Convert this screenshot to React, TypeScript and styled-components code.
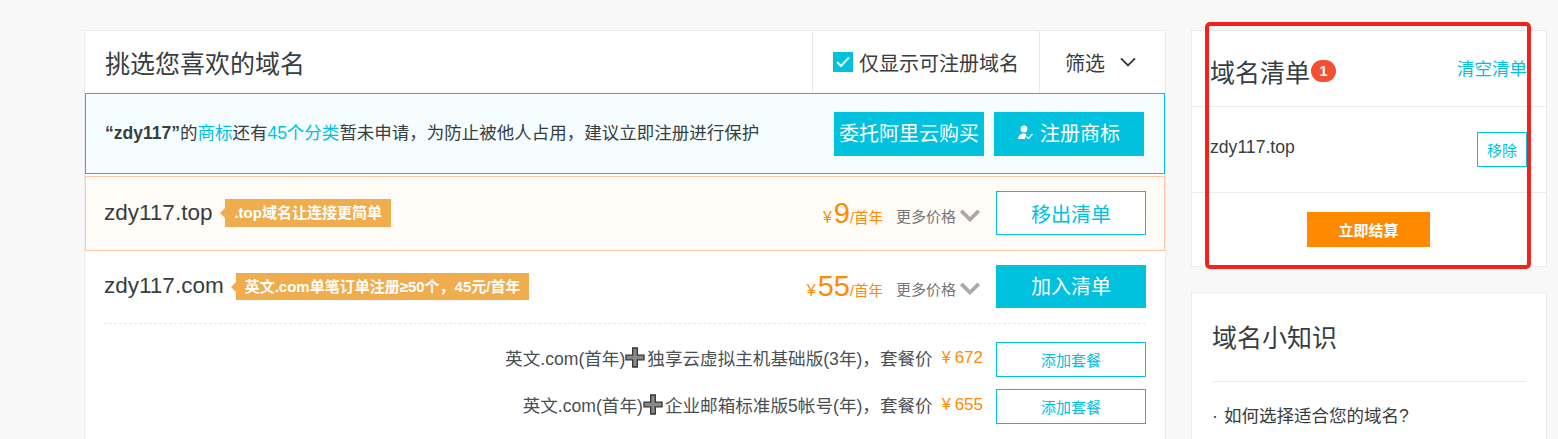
import React from "react";
import styled, { createGlobalStyle } from "styled-components";

const FONT = `"Liberation Sans", "Noto Sans CJK SC", sans-serif`;
const CYAN = "#00c1de";
const ORANGE = "#ff8a00";

const Global = createGlobalStyle`
  html, body { margin: 0; padding: 0; height: 439px; overflow: hidden; background: #f8f8f8; }
  body { font-family: ${FONT}; color: #373d41; }
  * { box-sizing: border-box; }
`;

const Page = styled.div`
  position: relative;
  display: flex;
  align-items: flex-start;
  gap: 25px;
  padding: 30px 11px 0 84px;
  width: 1558px;
`;
const Main = styled.main`
  width: 1082px;
  flex: none;
  background: #fff;
  border: 1px solid #ebebeb;
  padding-bottom: 40px;
`;
const Head = styled.div`
  display: flex;
  height: 62px;
  align-items: stretch;
`;
const Title = styled.h1`
  flex: 1;
  margin: 0;
  padding: 2px 0 0 20px;
  font-size: 25px;
  line-height: 62px;
  font-weight: 400;
`;
const HeadCell = styled.div<{ $w: number }>`
  width: ${(p) => p.$w}px;
  flex: none;
  display: flex;
  align-items: center;
  border-left: 1px solid #e8e8e8;
  padding-left: 20px;
  font-size: 20px;
`;
const Check = styled.span`
  width: 20px;
  height: 20px;
  background: ${CYAN};
  margin-right: 6px;
  display: flex;
  align-items: center;
  justify-content: center;
`;
const FilterCell = styled(HeadCell)`
  padding-left: 25px;
  gap: 15px;
`;
const Banner = styled.div`
  height: 81px;
  border: 1px solid ${CYAN};
  background: #f5fdff;
  display: flex;
  align-items: center;
  padding: 0 20px 0 19px;
  font-size: 17.5px;
`;
const BannerText = styled.p`
  flex: 1;
  margin: 0 0 4px;
  b { font-weight: 700; }
`;
const Link = styled.span`
  color: ${CYAN};
`;
const SolidButton = styled.button<{ $h: number; $gapLeft?: number }>`
  width: 150px;
  height: ${(p) => p.$h}px;
  flex: none;
  border: 0;
  padding: 0 0 2px;
  margin-left: ${(p) => p.$gapLeft ?? 0}px;
  background: ${CYAN};
  color: #fff;
  font: 400 20px ${FONT};
  display: flex;
  align-items: center;
  justify-content: center;
  gap: 7px;
`;
const OutlineButton = styled.button<{ $h: number; $size: number }>`
  width: 150px;
  height: ${(p) => p.$h}px;
  flex: none;
  border: 1px solid ${CYAN};
  padding: 0;
  background: #fff;
  color: ${CYAN};
  font: 400 ${(p) => p.$size}px ${FONT};
`;
const ActiveRow = styled.div`
  display: flex;
  align-items: center;
  height: 75px;
  margin-top: 2px;
  padding: 0 18px 1px 18px;
  border: 1px solid #ffc8a3;
  background: #fffbf7;
`;
const PlainRow = styled.div`
  display: flex;
  align-items: center;
  height: 72px;
  padding: 0 19px 2px;
  background: #fff;
`;
const Domain = styled.span<{ $gap: number }>`
  font-size: 22.5px;
  margin-right: ${(p) => p.$gap}px;
`;
const Promo = styled.span<{ $h: number }>`
  position: relative;
  height: ${(p) => p.$h}px;
  line-height: ${(p) => p.$h}px;
  padding: 0 9px;
  background: #f0ad4e;
  color: #fff;
  font-size: 15px;
  font-weight: 700;
  &::before {
    content: "";
    position: absolute;
    left: -5px;
    top: 9px;
    border: 5px solid transparent;
    border-left: 0;
    border-right-color: #f0ad4e;
  }
`;
const Spacer = styled.span`
  flex: 1;
`;
const Price = styled.span`
  color: ${ORANGE};
  font-size: 14.5px;
  display: flex;
  align-items: baseline;
`;
const Yen = styled.span<{ $gap: number }>`
  font-size: 16px;
  margin-right: ${(p) => p.$gap}px;
`;
const Amount = styled.span`
  font-size: 29px;
`;
const More = styled.span`
  margin: 4px 16px 0 13px;
  font-size: 15px;
  color: #777;
  display: flex;
  align-items: center;
  gap: 4px;
`;
const Dashed = styled.div`
  margin: 0 19px;
  border-top: 1px dashed #e6e6e6;
`;
const Packages = styled.div`
  display: flex;
  flex-direction: column;
  gap: 12px;
  padding: 18px 19px 0;
`;
const Package = styled.div`
  display: flex;
  align-items: center;
  justify-content: flex-end;
  height: 35px;
  font-size: 17.6px;
  color: #4a4f53;
`;
const PackInfo = styled.span`
  display: flex;
  align-items: center;
  margin-bottom: 4px;
`;
const PackPrice = styled.span`
  color: ${ORANGE};
  margin: 0 13px 0 9px;
  font-size: 17px;
  display: flex;
  align-items: baseline;
`;
const Plus = styled.svg`
  flex: none;
  width: 20px;
  height: 21px;
  margin: 0 2px 0 0;
`;
const Side = styled.aside`
  width: 356px;
  flex: none;
  display: flex;
  flex-direction: column;
  gap: 25px;
`;
const SideCard = styled.section`
  background: #fff;
  border: 1px solid #ebebeb;
`;
const CartHead = styled.div`
  height: 76px;
  display: flex;
  align-items: center;
  padding: 4px 19px 0 18px;
  border-bottom: 1px solid #ebebeb;
`;
const SideTitle = styled.h2`
  margin: 0;
  font-size: 25px;
  font-weight: 400;
`;
const Count = styled.span`
  width: 25px;
  height: 22px;
  margin-left: 1px;
  border-radius: 11px;
  background: #f4502f;
  color: #fff;
  font-size: 15px;
  font-weight: 700;
  text-align: center;
  line-height: 22px;
`;
const ClearLink = styled(Link)`
  font-size: 17.5px;
  margin-bottom: 6px;
`;
const CartRow = styled.div`
  height: 86px;
  display: flex;
  justify-content: space-between;
  padding: 25px 19px 0 18px;
  border-bottom: 1px solid #ebebeb;
`;
const CartDomain = styled.span`
  font-size: 17.6px;
  line-height: 30px;
`;
const RemoveButton = styled.button`
  width: 50px;
  height: 35px;
  border: 1px solid ${CYAN};
  padding: 0;
  background: #fff;
  color: ${CYAN};
  font: 400 15px ${FONT};
`;
const CartFoot = styled.div`
  height: 73px;
  display: flex;
  justify-content: center;
  padding: 19px 1px 0 0;
`;
const PayButton = styled.button`
  width: 123px;
  height: 35px;
  border: 0;
  padding: 0;
  background: ${ORANGE};
  color: #fff;
  font: 700 15px ${FONT};
`;
const TipCard = styled(SideCard)`
  padding: 0 20px;
  min-height: 220px;
`;
const TipHead = styled.div`
  height: 89px;
  display: flex;
  align-items: center;
  padding-bottom: 3px;
  border-bottom: 1px solid #ebebeb;
`;
const TipList = styled.ul`
  list-style: none;
  margin: 0;
  padding: 21px 0 0;
  font-size: 17.5px;
  line-height: 26px;
`;
const Marker = styled.span`
  display: inline-block;
  width: 12px;
`;
const Annotation = styled.div`
  position: absolute;
  left: 1205px;
  top: 22px;
  width: 326px;
  height: 247px;
  border: 4px solid #f5221b;
  border-radius: 5px;
  pointer-events: none;
`;

const Chevron = ({ size = 16, color = "#373d41", w = 2 }: { size?: number; color?: string; w?: number }) => (
  <svg width={size} height={size * 0.65} viewBox="0 0 16 10" fill="none">
    <path d="M1 1.2 8 8.2 15 1.2" stroke={color} strokeWidth={w} />
  </svg>
);

const PlusIcon = () => (
  <Plus viewBox="0 0 20 21">
    <path d="M7.7 1h4.6v7.2H19v4.6h-6.7V20H7.7v-7.2H1V8.2h6.7z" fill="#8a8a8a" stroke="#333" strokeWidth="1.3" />
  </Plus>
);

const MorePrice = () => (
  <More>
    更多价格
    <Chevron size={20} color="#aaa" w={3} />
  </More>
);

export default function App() {
  return (
    <>
      <Global />
      <Page>
        <Main>
          <Head>
            <Title>挑选您喜欢的域名</Title>
            <HeadCell $w={227}>
              <Check>
                <svg width="14" height="12" viewBox="0 0 14 12" fill="none">
                  <path d="M1 6 5 10 13 1.5" stroke="#e6fbff" strokeWidth="2" />
                </svg>
              </Check>
              仅显示可注册域名
            </HeadCell>
            <FilterCell $w={126}>
              筛选
              <Chevron size={16} />
            </FilterCell>
          </Head>
          <Banner>
            <BannerText>
              <b>“zdy117”</b>的<Link>商标</Link>还有<Link>45个分类</Link>暂未申请，为防止被他人占用，建议立即注册进行保护
            </BannerText>
            <SolidButton $h={44}>委托阿里云购买</SolidButton>
            <SolidButton $h={44} $gapLeft={10}>
              <svg width="15" height="15" viewBox="0 0 15 15" fill="#fff">
                <circle cx="6" cy="4" r="3.4" />
                <path d="M0 14c0-3.5 2.6-5.5 6-5.5 1 0 1.8.2 2.5.5L7 14z" />
                <path d="M8.5 11.5 10.5 13.5 14.5 9" fill="none" stroke="#fff" strokeWidth="1.3" />
              </svg>
              注册商标
            </SolidButton>
          </Banner>
          <ActiveRow>
            <Domain $gap={13}>zdy117.top</Domain>
            <Promo $h={28}>.top域名让连接更简单</Promo>
            <Spacer />
            <Price>
              <Yen $gap={2}>¥</Yen>
              <Amount>9</Amount>/首年
            </Price>
            <MorePrice />
            <OutlineButton $h={44} $size={20}>移出清单</OutlineButton>
          </ActiveRow>
          <PlainRow>
            <Domain $gap={12}>zdy117.com</Domain>
            <Promo $h={27}>英文.com单笔订单注册≥50个，45元/首年</Promo>
            <Spacer />
            <Price>
              <Yen $gap={2}>¥</Yen>
              <Amount>55</Amount>/首年
            </Price>
            <MorePrice />
            <SolidButton $h={43}>加入清单</SolidButton>
          </PlainRow>
          <Dashed />
          <Packages>
            <Package>
              <PackInfo>
                英文.com(首年)<PlusIcon />独享云虚拟主机基础版(3年)，套餐价
                <PackPrice><Yen $gap={4}>¥</Yen>672</PackPrice>
              </PackInfo>
              <OutlineButton $h={35} $size={15}>添加套餐</OutlineButton>
            </Package>
            <Package>
              <PackInfo>
                英文.com(首年)<PlusIcon />企业邮箱标准版5帐号(年)，套餐价
                <PackPrice><Yen $gap={4}>¥</Yen>655</PackPrice>
              </PackInfo>
              <OutlineButton $h={35} $size={15}>添加套餐</OutlineButton>
            </Package>
          </Packages>
        </Main>
        <Side>
          <SideCard>
            <CartHead>
              <SideTitle>域名清单</SideTitle>
              <Count>1</Count>
              <Spacer />
              <ClearLink>清空清单</ClearLink>
            </CartHead>
            <CartRow>
              <CartDomain>zdy117.top</CartDomain>
              <RemoveButton>移除</RemoveButton>
            </CartRow>
            <CartFoot>
              <PayButton>立即结算</PayButton>
            </CartFoot>
          </SideCard>
          <TipCard>
            <TipHead>
              <SideTitle>域名小知识</SideTitle>
            </TipHead>
            <TipList>
              <li>
                <Marker>·</Marker>如何选择适合您的域名?
              </li>
            </TipList>
          </TipCard>
        </Side>
        <Annotation />
      </Page>
    </>
  );
}
